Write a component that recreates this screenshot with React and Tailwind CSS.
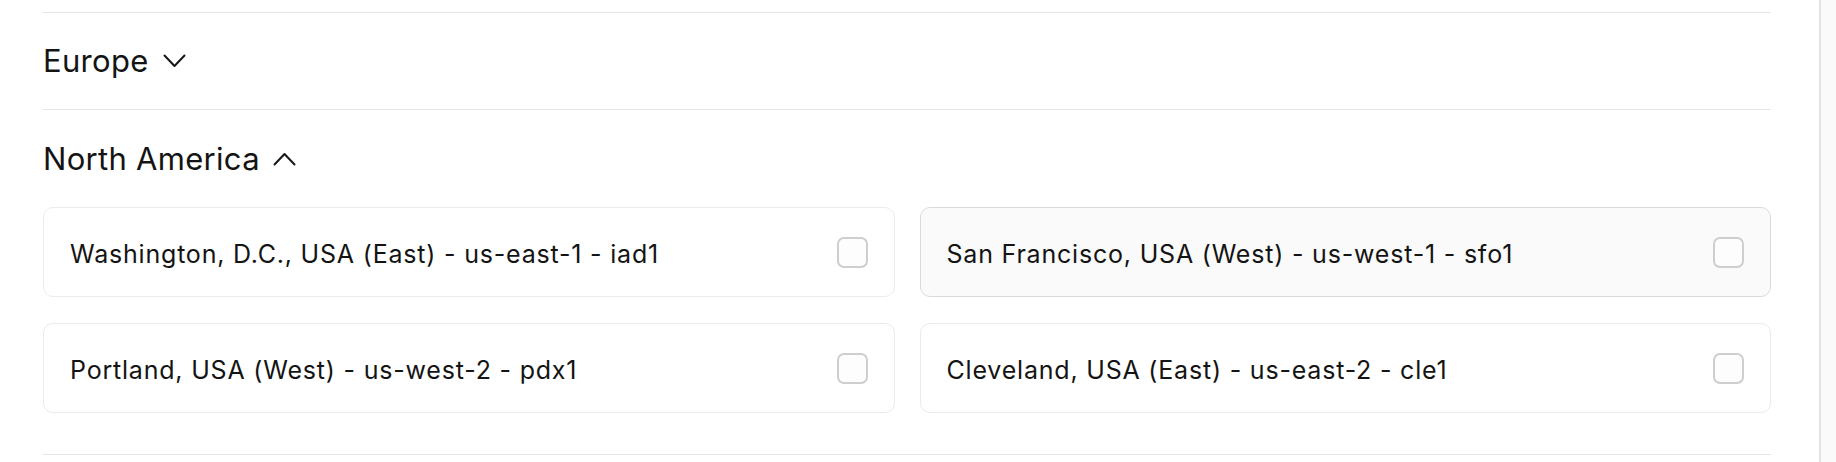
import React from 'react'

const regions = [
  { label: 'Washington, D.C., USA (East) - us-east-1 - iad1' },
  { label: 'San Francisco, USA (West) - us-west-1 - sfo1', hover: true },
  { label: 'Portland, USA (West) - us-west-2 - pdx1' },
  { label: 'Cleveland, USA (East) - us-east-2 - cle1' },
]

function Chevron({ up }) {
  return (
    <svg width="23" height="14" viewBox="0 0 23 14" fill="none" className="shrink-0">
      <path
        d={up ? 'M1.5 12.5 L11.5 2 L21.5 12.5' : 'M1.5 1.5 L11.5 12 L21.5 1.5'}
        stroke="#171717"
        strokeWidth="2"
        strokeLinecap="round"
        strokeLinejoin="round"
      />
    </svg>
  )
}

function RegionCard({ label, hover }) {
  return (
    <label
      className={`flex items-center justify-between h-[90px] px-[26px] rounded-[10px] border cursor-pointer ${
        hover ? 'bg-[#fafafa] border-[#dadada]' : 'bg-white border-[#ebebeb]'
      }`}
    >
      <span className="pt-[3px] text-[25px] leading-[36px] tracking-[0.8px] text-[#141414]">{label}</span>
      <span className="w-[31px] h-[31px] rounded-[7px] border-2 border-[#cecece] bg-[#fdfdfd]" />
    </label>
  )
}

export default function App() {
  return (
    <div className="flex h-[462px] overflow-hidden bg-white" style={{ fontFamily: 'Inter, "Noto Sans", sans-serif' }}>
      <div className="flex-1 pl-[43px] pr-[48px]">
        <div className="h-[12px]" />
        <div className="border-t border-[#e6e6e6]">
          <button className="flex items-center gap-[14px] py-[30px] text-[31px] leading-[36px] tracking-[0.3px] text-[#141414]">
            Europe <Chevron />
          </button>
        </div>
        <div className="border-t border-[#e6e6e6] pb-[41px]">
          <button className="flex items-center gap-[13px] pt-[31px] pb-[30px] text-[31px] leading-[36px] tracking-[0.3px] text-[#141414]">
            North America <Chevron up />
          </button>
          <div className="grid grid-cols-2 gap-x-[25px] gap-y-[26px]">
            {regions.map((r) => (
              <RegionCard key={r.label} {...r} />
            ))}
          </div>
        </div>
        <div className="border-t border-[#e6e6e6]" />
      </div>
      <div className="w-[17px] border-l-2 border-[#e4e4e4] bg-[#fafafa]" />
    </div>
  )
}
